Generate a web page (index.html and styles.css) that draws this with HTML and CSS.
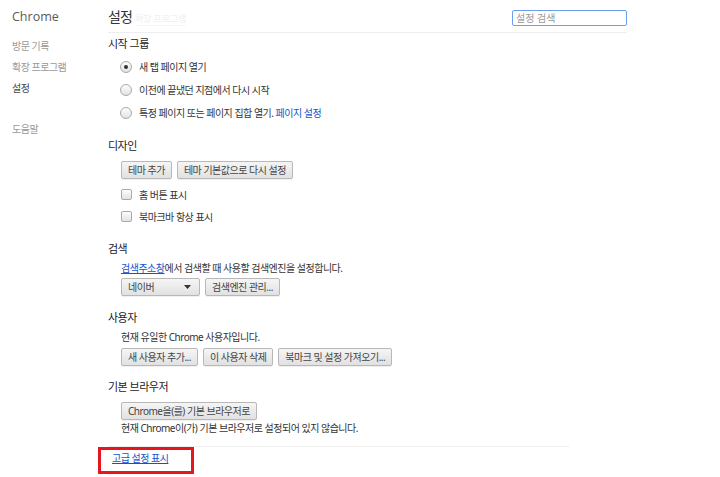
FILE: index.html
```html
<!DOCTYPE html>
<html lang="ko">
<head>
    <meta charset="UTF-8">
    <meta name="viewport" content="width=device-width, initial-scale=1.0">
    <title>설정</title>
    <link rel="stylesheet" href="styles.css">
</head>
<body>

<div class="page">
    <nav class="sidebar">
        <div class="brand">Chrome</div>
        <ul class="nav">
            <li>방문 기록</li>
            <li>확장 프로그램</li>
            <li class="active">설정</li>
            <li class="help">도움말</li>
        </ul>
    </nav>

    <main class="main">
        <header class="header">
            <h1>설정<span class="ghost">확장 프로그램</span></h1>
            <input class="search" type="search" placeholder="설정 검색">
        </header>

        <section class="section first">
            <h3>시작 그룹</h3>
            <div class="options">
                <div class="option"><span class="radio checked"></span>새 탭 페이지 열기</div>
                <div class="option"><span class="radio"></span>이전에 끝냈던 지점에서 다시 시작</div>
                <div class="option"><span class="radio"></span>특정 페이지 또는 페이지 집합 열기.&nbsp;<a class="plain-link" href="#">페이지 설정</a></div>
            </div>
        </section>

        <section class="section">
            <h3>디자인</h3>
            <div class="buttons spaced">
                <button>테마 추가</button>
                <button>테마 기본값으로 다시 설정</button>
            </div>
            <div class="checks">
                <div class="check-row"><span class="checkbox"></span>홈 버튼 표시</div>
                <div class="check-row"><span class="checkbox"></span>북마크바 항상 표시</div>
            </div>
        </section>

        <section class="section">
            <h3>검색</h3>
            <p class="desc"><a href="#">검색주소창</a>에서 검색할 때 사용할 검색엔진을 설정합니다.</p>
            <div class="buttons after-desc">
                <button class="select"><span>네이버</span><svg width="7" height="4" viewBox="0 0 7 4"><path d="M0 0h7L3.5 4z" fill="#333"/></svg></button>
                <button>검색엔진 관리...</button>
            </div>
        </section>

        <section class="section">
            <h3>사용자</h3>
            <p class="desc">현재 유일한 Chrome 사용자입니다.</p>
            <div class="buttons after-user">
                <button>새 사용자 추가...</button>
                <button>이 사용자 삭제</button>
                <button>북마크 및 설정 가져오기...</button>
            </div>
        </section>

        <section class="section browser">
            <h3>기본 브라우저</h3>
            <div class="buttons spaced">
                <button>Chrome을(를) 기본 브라우저로</button>
            </div>
            <p class="desc status">현재 Chrome이(가) 기본 브라우저로 설정되어 있지 않습니다.</p>
        </section>

        <footer class="footer">
            <div class="highlight"><a href="#">고급 설정 표시</a></div>
        </footer>
    </main>
</div>

</body>
</html>
```

FILE: styles.css
```css
body {
    margin: 0;
    font-family: "Noto Sans", "Noto Sans CJK KR", sans-serif;
    font-size: 10px;
    letter-spacing: -0.5px;
    color: #333;
    background: #fff;
}
.page {
    display: flex;
}
.sidebar {
    width: 96px;
    padding: 8px 0 0 12px;
}
.brand {
    font-family: "Open Sans", sans-serif;
    font-size: 12.5px;
    line-height: 18px;
    letter-spacing: 0;
    color: #5a5a5a;
}
.nav {
    list-style: none;
    margin: 10px 0 0;
    padding: 0;
}
.nav li {
    line-height: 21px;
    color: #999;
}
.nav .active {
    color: #464646;
}
.nav .help {
    margin-top: 20px;
}
.main {
    width: 519px;
}
.header {
    height: 32px;
    border-bottom: 1px solid #eee;
    display: flex;
    justify-content: space-between;
    align-items: flex-start;
}
h1 {
    margin: 8px 0 0;
    font-size: 14px;
    line-height: 18px;
    font-weight: normal;
    letter-spacing: -1px;
    color: #333;
}
.ghost {
    font-size: 9.5px;
    letter-spacing: -0.5px;
    color: #f0f0f0;
    margin-left: 3px;
    border-bottom: 1px solid #f6f6f6;
}
.search {
    margin-top: 10px;
    width: 115px;
    height: 16px;
    box-sizing: border-box;
    border: 1px solid #6a9ff0;
    border-radius: 2px;
    padding: 0 3px;
    font: inherit;
    outline: none;
}
.search::placeholder {
    color: #999;
}
.section {
    margin-top: 15px;
}
.section.first {
    margin-top: 4px;
}
.section.browser {
    margin-top: 14px;
}
h3 {
    margin: 0;
    font-size: 11px;
    line-height: 14px;
    font-weight: normal;
    color: #222;
}
.options {
    margin-top: 4px;
}
.option {
    display: flex;
    align-items: center;
    height: 23px;
    margin-left: 12px;
}
.radio {
    width: 12px;
    height: 12px;
    box-sizing: border-box;
    border: 1px solid #aaa;
    border-radius: 50%;
    background: linear-gradient(#fdfdfd, #e2e2e2);
    margin-right: 7px;
    display: flex;
    align-items: center;
    justify-content: center;
}
.radio.checked::after {
    content: "";
    width: 4px;
    height: 4px;
    border-radius: 50%;
    background: #333;
}
a {
    color: #15c;
}
.plain-link {
    text-decoration: none;
}
.buttons {
    display: flex;
    gap: 5px;
    margin-left: 13px;
}
.buttons.spaced {
    margin-top: 8px;
}
.buttons.after-desc {
    margin-top: 3px;
}
.buttons.after-user {
    margin-top: 4px;
}
button {
    height: 18px;
    padding: 0 6px;
    border: 1px solid #b8b8b8;
    border-radius: 2px;
    background: linear-gradient(#f5f5f5, #e1e1e1);
    box-shadow: 0 1px 0 rgba(0, 0, 0, 0.06);
    color: #444;
    font: inherit;
    letter-spacing: inherit;
    line-height: 16px;
}
.select {
    width: 79px;
    display: flex;
    align-items: center;
    justify-content: space-between;
    padding: 0 8px 0 6px;
}
.checks {
    margin-top: 4px;
}
.check-row {
    display: flex;
    align-items: center;
    height: 22px;
    margin-left: 13px;
}
.checkbox {
    width: 11px;
    height: 11px;
    box-sizing: border-box;
    border: 1px solid #aaa;
    border-radius: 2px;
    background: linear-gradient(#fdfdfd, #e2e2e2);
    margin-right: 7px;
}
.desc {
    margin: 5px 0 0 13px;
    line-height: 14px;
}
.desc.status {
    margin-top: 1px;
}
.footer {
    width: 461px;
    margin-top: 11px;
    border-top: 1px solid #eee;
}
.highlight {
    display: inline-block;
    margin-left: -10px;
    border: 3px solid #e5161d;
    padding: 1px 23px 6px 11px;
    line-height: 14px;
}
```
